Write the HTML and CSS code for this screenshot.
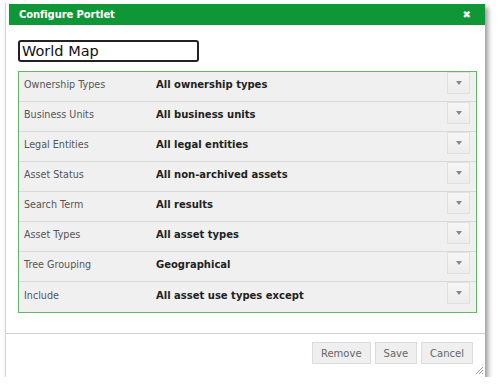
FILE: index.html
```html
<!DOCTYPE html>
<html lang="en">
<head>
    <meta charset="UTF-8" />
    <title>Configure Portlet</title>
    <link rel="stylesheet" href="styles.css">
</head>
<body>

    <div class="dialog">
        <div class="dialog-header">
            <span class="dialog-title">Configure Portlet</span>
            <span class="dialog-close">&#x2716;</span>
        </div>

        <div class="dialog-body">
            <input class="portlet-name" type="text" value="World Map" />

            <div class="filters">
                <div class="filter-row">
                    <span class="filter-label">Ownership Types</span>
                    <span class="filter-value">All ownership types</span>
                    <span class="filter-btn"></span>
                </div>
                <div class="filter-row">
                    <span class="filter-label">Business Units</span>
                    <span class="filter-value">All business units</span>
                    <span class="filter-btn"></span>
                </div>
                <div class="filter-row">
                    <span class="filter-label">Legal Entities</span>
                    <span class="filter-value">All legal entities</span>
                    <span class="filter-btn"></span>
                </div>
                <div class="filter-row">
                    <span class="filter-label">Asset Status</span>
                    <span class="filter-value">All non-archived assets</span>
                    <span class="filter-btn"></span>
                </div>
                <div class="filter-row">
                    <span class="filter-label">Search Term</span>
                    <span class="filter-value">All results</span>
                    <span class="filter-btn"></span>
                </div>
                <div class="filter-row">
                    <span class="filter-label">Asset Types</span>
                    <span class="filter-value">All asset types</span>
                    <span class="filter-btn"></span>
                </div>
                <div class="filter-row">
                    <span class="filter-label">Tree Grouping</span>
                    <span class="filter-value">Geographical</span>
                    <span class="filter-btn"></span>
                </div>
                <div class="filter-row">
                    <span class="filter-label">Include</span>
                    <span class="filter-value">All asset use types except</span>
                    <span class="filter-btn"></span>
                </div>
            </div>
        </div>

        <div class="dialog-footer">
            <button type="button">Remove</button>
            <button type="button">Save</button>
            <button type="button">Cancel</button>
            <svg class="grip" width="9" height="9" viewBox="0 0 9 9">
                <path d="M8 1 L1 8 M8 4 L4 8 M8 7 L7 8" stroke="#999" stroke-width="1" fill="none" />
            </svg>
        </div>
    </div>

</body>
</html>
```

FILE: styles.css
```css
:root {
    --green: #0f9737;
    --green-line: #63b868;
    --row-bg: #f0f0f0;
    --text: #444;
}

* {
    box-sizing: border-box;
    margin: 0;
    padding: 0;
}

body {
    font-family: 'DejaVu Sans', Verdana, sans-serif;
    background: #fff;
    color: var(--text);
    padding: 3px 0 0 5px;
}

.dialog {
    width: 480px;
    height: 374px;
    border-left: 1px solid #d4d4d4;
    background: #fff;
    box-shadow: 3px 4px 5px rgba(0, 0, 0, 0.4);
    display: flex;
    flex-direction: column;
    position: relative;
}

.dialog-header {
    margin: 1px 0 0 3px;
    height: 21px;
    background: var(--green);
    color: #fff;
    display: flex;
    align-items: center;
    justify-content: space-between;
    padding: 0 14px 0 10px;
}

.dialog-title {
    font-size: 10px;
    font-weight: bold;
    letter-spacing: -0.1px;
}

.dialog-close {
    font-size: 10px;
    font-weight: bold;
}

.dialog-body {
    padding: 15px 8px 0 12px;
    flex: 1;
}

.portlet-name {
    display: block;
    width: 181px;
    height: 22px;
    border: 2px solid #222;
    border-radius: 3px;
    padding: 0 2px;
    font-family: 'DejaVu Sans', Verdana, sans-serif;
    font-size: 14.5px;
    color: #111;
    outline: none;
}

.filters {
    margin-top: 9px;
    border: 1px solid var(--green-line);
    background: var(--row-bg);
}

.filter-row {
    display: grid;
    grid-template-columns: 132px 1fr 23px;
    align-items: center;
    height: 30px;
    padding: 0 6px 4px 5px;
    border-bottom: 1px solid #d8d8d8;
}

.filter-row:last-child {
    border-bottom: none;
}

.filter-label {
    font-size: 9.6px;
    color: #555;
}

.filter-value {
    font-size: 10px;
    font-weight: bold;
    color: #222;
}

.filter-btn {
    align-self: start;
    width: 23px;
    height: 22px;
    border: 1px solid #e0e0e0;
    background: linear-gradient(#f6f6f6, #ececec);
    display: flex;
    align-items: center;
    justify-content: center;
}

.filter-btn::after {
    content: "";
    border-left: 3.5px solid transparent;
    border-right: 3.5px solid transparent;
    border-top: 4px solid #888;
}

.dialog-footer {
    height: 44px;
    border-top: 1px solid #d0d0d0;
    display: flex;
    justify-content: flex-end;
    align-items: flex-start;
    gap: 4px;
    padding: 8px 12px 0 0;
}

.dialog-footer button {
    height: 22px;
    padding: 0 8px;
    border: 1px solid #dcdcdc;
    background: #efefef;
    font-family: 'DejaVu Sans', Verdana, sans-serif;
    font-size: 10px;
    color: #666;
}

.grip {
    position: absolute;
    right: 1px;
    bottom: 2px;
}
```
